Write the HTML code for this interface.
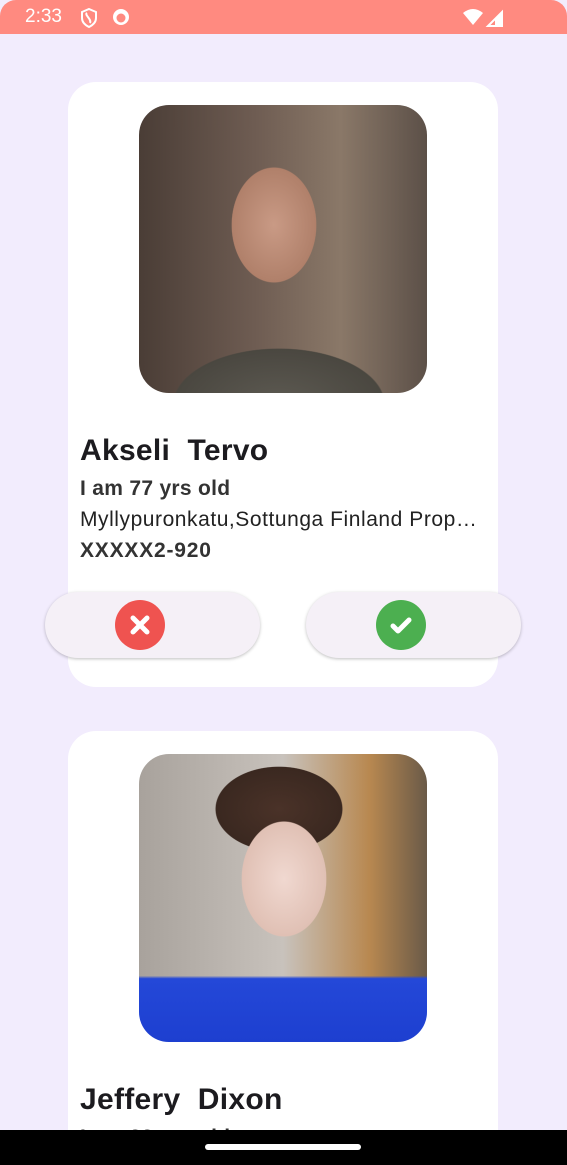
<!DOCTYPE html>
<html style="overflow:hidden;height:1165px"><head><style>
*{margin:0;padding:0;box-sizing:border-box}
body{width:567px;height:1165px;overflow:hidden;background:#f2ecfd;font-family:"Liberation Sans",Roboto,sans-serif;position:relative}
.sb{position:absolute;top:0;left:0;width:567px;height:34px;background:#ff8a80;border-radius:16px 16px 0 0;color:#fff}
.card{position:absolute;left:68px;width:430px;background:#fff;border-radius:28px}
.photo{position:absolute;left:71px;width:288px;height:288px;border-radius:30px;overflow:hidden}
.t{position:absolute;left:12px;color:#1c1b1f;white-space:nowrap}
.btn{position:absolute;top:592px;width:215px;height:66px;border-radius:33px;background:#f5f0f7;box-shadow:0 1px 3px rgba(0,0,0,.25)}
.ic{position:absolute;left:70px;top:8px;width:50px;height:50px;border-radius:50%}
</style></head><body>
<div class="sb">
<span style="position:absolute;left:25px;top:6px;font-size:19px">2:33</span>
<svg style="position:absolute;left:80px;top:8px" width="18" height="20" viewBox="0 0 18 20"><path d="M9 1 L16 4 V10 C16 14 13 17 9 19 C5 17 2 14 2 10 V4 Z" fill="none" stroke="#fff" stroke-width="2"/><path d="M7 5 C4 7 12 11 10 15" fill="none" stroke="#fff" stroke-width="2"/></svg>
<svg style="position:absolute;left:112px;top:8px" width="18" height="18"><circle cx="9" cy="9" r="8" fill="#fff"/><circle cx="9" cy="10" r="4.5" fill="#ff8a80"/></svg>
<svg style="position:absolute;left:462px;top:8px" width="44" height="20"><path d="M1 5 Q11 -3 21 5 L11 17 Z" fill="#fff"/><path d="M26 18 L40 4 V18 Z" fill="none" stroke="#fff" stroke-width="2"/><path d="M33 11 L40 4 V18 H33Z" fill="#fff"/></svg>
</div>

<div class="card" style="top:82px;height:605px">
<div class="photo" style="top:23px;background:radial-gradient(ellipse 70px 95px at 135px 120px,#c99a85 0%,#b0806a 60%,transparent 61%),radial-gradient(ellipse 150px 80px at 140px 300px,#5d5a52 0%,#4a4740 70%,transparent 71%),linear-gradient(90deg,#4a3d36,#6e5c52 40%,#8a7868 70%,#5c5048)"></div>
<div class="t" style="top:352px;font-size:30px;font-weight:bold;letter-spacing:0.3px">Akseli&nbsp; Tervo</div>
<div class="t" style="top:395px;font-size:21px;font-weight:bold;color:#333;letter-spacing:0.3px">I am 77 yrs old</div>
<div class="t" style="top:426px;font-size:21px;color:#222;letter-spacing:0.55px">Myllypuronkatu,Sottunga Finland Prop…</div>
<div class="t" style="top:457px;font-size:21px;font-weight:bold;color:#333;letter-spacing:0.8px">XXXXX2-920</div>
</div>
<div class="btn" style="left:45px"><div class="ic" style="background:#ef5350"><svg width="50" height="50"><path d="M18 18 L32 32 M32 18 L18 32" stroke="#fff" stroke-width="5" stroke-linecap="round"/></svg></div></div>
<div class="btn" style="left:306px"><div class="ic" style="background:#4caf50"><svg width="50" height="50"><path d="M17 26 L22 31 L33 20" fill="none" stroke="#fff" stroke-width="5" stroke-linecap="round" stroke-linejoin="round"/></svg></div></div>

<div class="card" style="top:731px;height:434px;border-radius:28px 28px 0 0">
<div class="photo" style="top:23px;background:radial-gradient(ellipse 70px 95px at 145px 125px,#f0d8d0 0%,#e0c0b4 60%,transparent 61%),radial-gradient(ellipse 90px 60px at 140px 55px,#4a3228 0%,#3a2820 70%,transparent 71%),linear-gradient(0deg,#1d3fd0 0%,#2448d8 22%,transparent 23%),linear-gradient(90deg,#a8a29c,#c8c2bc 50%,#b88850 80%,#6a5a48)"></div>
<div class="t" style="top:352px;font-size:30px;font-weight:bold;letter-spacing:0.3px">Jeffery&nbsp; Dixon</div>
<div class="t" style="top:395px;font-size:21px;font-weight:bold;color:#333;letter-spacing:0.3px">I am 22 yrs old</div>
</div>

<div style="position:absolute;left:0;top:1130px;width:567px;height:35px;background:#000"><div style="position:absolute;left:205px;top:14px;width:156px;height:6px;border-radius:3px;background:#fff"></div></div>
</body></html>
